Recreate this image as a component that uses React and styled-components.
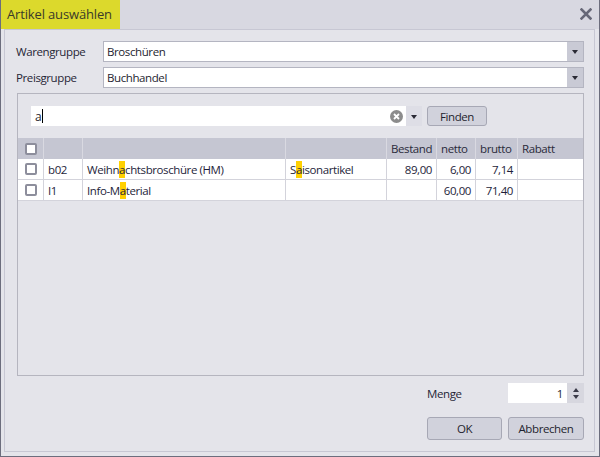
import React from "react";
import styled, { createGlobalStyle } from "styled-components";

const GlobalStyle = createGlobalStyle`
  html, body {
    margin: 0;
    padding: 0;
    background: #e4e4ea;
  }
  * {
    box-sizing: border-box;
  }
`;

const Window = styled.div`
  width: 600px;
  height: 457px;
  display: flex;
  flex-direction: column;
  background: #e4e4ea;
  border: 1px solid #6c6d7d;
  border-top: none;
  font-family: "Open Sans", "Noto Sans", sans-serif;
  font-size: 11.5px;
  letter-spacing: -0.4px;
  color: #1f1f2e;
`;

const TitleBar = styled.div`
  height: 29px;
  display: flex;
  align-items: stretch;
  justify-content: space-between;
  background: #d8d8e1;
`;

const Title = styled.div`
  display: flex;
  align-items: center;
  padding: 0 8px 1px 6px;
  background: #dcd92c;
  font-size: 13px;
  letter-spacing: -0.15px;
  color: #3a3a2a;
`;

const CloseButton = styled.div`
  display: flex;
  align-items: center;
  padding: 0 7px 2px 0;
`;

const Frame = styled.div`
  flex: 1;
  display: flex;
  flex-direction: column;
  margin: 0 4px 4px 3px;
  padding: 11px 10px 11px 11px;
  border: 1px solid #c7c7d3;
`;

const FormRow = styled.div`
  display: flex;
  align-items: center;
  height: 21px;
  margin-bottom: 5px;
`;

const Label = styled.label`
  width: ${({ width }) => width || 87}px;
  flex-shrink: 0;
  color: #262636;
`;

const Combo = styled.div`
  flex: 1;
  height: 100%;
  display: flex;
  background: #fff;
  border: 1px solid #b4b5c1;
`;

const ComboText = styled.div`
  flex: 1;
  display: flex;
  align-items: center;
  padding-left: 3px;
  color: #1e1e30;
`;

const ComboButton = styled.div`
  width: 16px;
  display: flex;
  align-items: center;
  justify-content: center;
  background: ${({ light }) => (light ? "#dedee6" : "#c9cad5")};
`;

const Arrow = styled.div`
  width: 0;
  height: 0;
  border-left: 3.5px solid transparent;
  border-right: 3.5px solid transparent;
  border-top: 4px solid #2a2a35;
  margin-top: 1px;
`;

const Group = styled.div`
  flex: 1;
  display: flex;
  flex-direction: column;
  margin-left: 1px;
  border: 1px solid #b5b5bf;
  padding-top: 12px;
`;

const SearchRow = styled.div`
  display: flex;
  align-items: center;
  height: 20px;
  margin: 0 0 12px 13px;
  gap: 5px;
`;

const SearchBox = styled.div`
  width: 391px;
  height: 100%;
  display: flex;
  background: #fff;
`;

const SearchText = styled.div`
  flex: 1;
  display: flex;
  align-items: center;
  padding-left: 4px;
  font-size: 12px;
`;

const Caret = styled.span`
  display: inline-block;
  width: 1px;
  height: 14px;
  background: #000;
  margin-left: 1px;
`;

const ClearIcon = styled.div`
  width: 20px;
  display: flex;
  align-items: center;
  justify-content: center;
`;

const Button = styled.button`
  width: ${({ width }) => width}px;
  height: ${({ height }) => height || 20}px;
  padding: 0;
  border: 1px solid #a7a8b5;
  border-radius: 3px;
  background: #d1d2dc;
  font-family: inherit;
  font-size: 11.5px;
  letter-spacing: -0.4px;
  color: #1f1f2e;
`;

const Grid = styled.div`
  display: grid;
  grid-template-columns: 25px 39px 203px 101px 50px 39px 42px 1fr;
`;

const HeadCell = styled.div`
  height: 21px;
  display: flex;
  align-items: center;
  justify-content: ${({ center }) => (center ? "center" : "flex-start")};
  padding-top: ${({ center }) => (center ? 1 : 0)}px;
  padding-left: ${({ center }) => (center ? 0 : 4)}px;
  background: #c5c6d2;
  border-left: ${({ first }) => (first ? "none" : "1px solid #d9d9e1")};
  color: #2a2a3a;
`;

const Cell = styled.div`
  height: 21px;
  display: flex;
  align-items: center;
  justify-content: ${({ align }) =>
    align === "right" ? "flex-end" : align === "center" ? "center" : "flex-start"};
  padding: 0 4px;
  background: #fff;
  border-left: ${({ first }) => (first ? "none" : "1px solid #d3d3db")};
  border-bottom: 1px solid #d3d3db;
  color: #1e1e3a;
  white-space: nowrap;
`;

const Check = styled.span`
  width: 12px;
  height: 12px;
  border: 2px solid #8d8e9c;
  border-radius: 2px;
  background: #fff;
`;

const Mark = styled.span`
  background: #ffd000;
  padding: 1px 0;
`;

const Footer = styled.div`
  display: flex;
  align-items: center;
  justify-content: flex-end;
  height: ${({ height }) => height}px;
  margin-top: ${({ top }) => top}px;
  gap: ${({ gap }) => gap || 0}px;
`;

const Spin = styled.div`
  width: 76px;
  height: 100%;
  display: flex;
  background: #fff;
`;

const SpinValue = styled.div`
  flex: 1;
  display: flex;
  align-items: center;
  justify-content: flex-end;
  padding-right: 4px;
`;

const SpinButtons = styled.div`
  width: 17px;
  display: flex;
  flex-direction: column;
  align-items: center;
  justify-content: center;
  gap: 3px;
  background: #d7d7df;
`;

const SpinArrow = styled.div`
  width: 0;
  height: 0;
  border-left: 3px solid transparent;
  border-right: 3px solid transparent;
  border-${({ up }) => (up ? "bottom" : "top")}: 4px solid #3a3a48;
`;

const columns = ["", "", "", "Bestand", "netto", "brutto", "Rabatt"];

const rows = [
  {
    code: "b02",
    name: (
      <>
        Weihn<Mark>a</Mark>chtsbroschüre (HM)
      </>
    ),
    group: (
      <>
        S<Mark>a</Mark>isonartikel
      </>
    ),
    stock: "89,00",
    net: "6,00",
    gross: "7,14"
  },
  {
    code: "I1",
    name: (
      <>
        Info-M<Mark>a</Mark>terial
      </>
    ),
    group: "",
    stock: "",
    net: "60,00",
    gross: "71,40"
  }
];

const App = () => {
  return (
    <>
      <GlobalStyle />
      <Window>
        <TitleBar>
          <Title>Artikel auswählen</Title>
          <CloseButton>
            <svg width="12" height="12" viewBox="0 0 12 12">
              <path
                d="M1.5 1.5 L10.5 10.5 M10.5 1.5 L1.5 10.5"
                stroke="#676878"
                strokeWidth="2.6"
                strokeLinecap="square"
              />
            </svg>
          </CloseButton>
        </TitleBar>
        <Frame>
          <FormRow>
            <Label>Warengruppe</Label>
            <Combo>
              <ComboText>Broschüren</ComboText>
              <ComboButton>
                <Arrow />
              </ComboButton>
            </Combo>
          </FormRow>
          <FormRow>
            <Label>Preisgruppe</Label>
            <Combo>
              <ComboText>Buchhandel</ComboText>
              <ComboButton>
                <Arrow />
              </ComboButton>
            </Combo>
          </FormRow>
          <Group>
            <SearchRow>
              <SearchBox>
                <SearchText>
                  a<Caret />
                </SearchText>
                <ClearIcon>
                  <svg width="13" height="13" viewBox="0 0 13 13">
                    <circle cx="6.5" cy="6.5" r="6.5" fill="#8c8c8c" />
                    <path
                      d="M4 4 L9 9 M9 4 L4 9"
                      stroke="#fff"
                      strokeWidth="1.8"
                    />
                  </svg>
                </ClearIcon>
                <ComboButton light>
                  <Arrow />
                </ComboButton>
              </SearchBox>
              <Button width={60}>Finden</Button>
            </SearchRow>
            <Grid>
              <HeadCell first center>
                <Check />
              </HeadCell>
              {columns.map((c, i) => (
                <HeadCell key={i}>{c}</HeadCell>
              ))}
              {rows.map(r => (
                <React.Fragment key={r.code}>
                  <Cell first align="center">
                    <Check />
                  </Cell>
                  <Cell>{r.code}</Cell>
                  <Cell>{r.name}</Cell>
                  <Cell>{r.group}</Cell>
                  <Cell align="right">{r.stock}</Cell>
                  <Cell align="right">{r.net}</Cell>
                  <Cell align="right">{r.gross}</Cell>
                  <Cell />
                </React.Fragment>
              ))}
            </Grid>
          </Group>
          <Footer height={20} top={7}>
            <Label width={81}>Menge</Label>
            <Spin>
              <SpinValue>1</SpinValue>
              <SpinButtons>
                <SpinArrow up />
                <SpinArrow />
              </SpinButtons>
            </Spin>
          </Footer>
          <Footer height={23} top={14} gap={6}>
            <Button width={75} height={23}>
              OK
            </Button>
            <Button width={76} height={23}>
              Abbrechen
            </Button>
          </Footer>
        </Frame>
      </Window>
    </>
  );
};

export default App;
